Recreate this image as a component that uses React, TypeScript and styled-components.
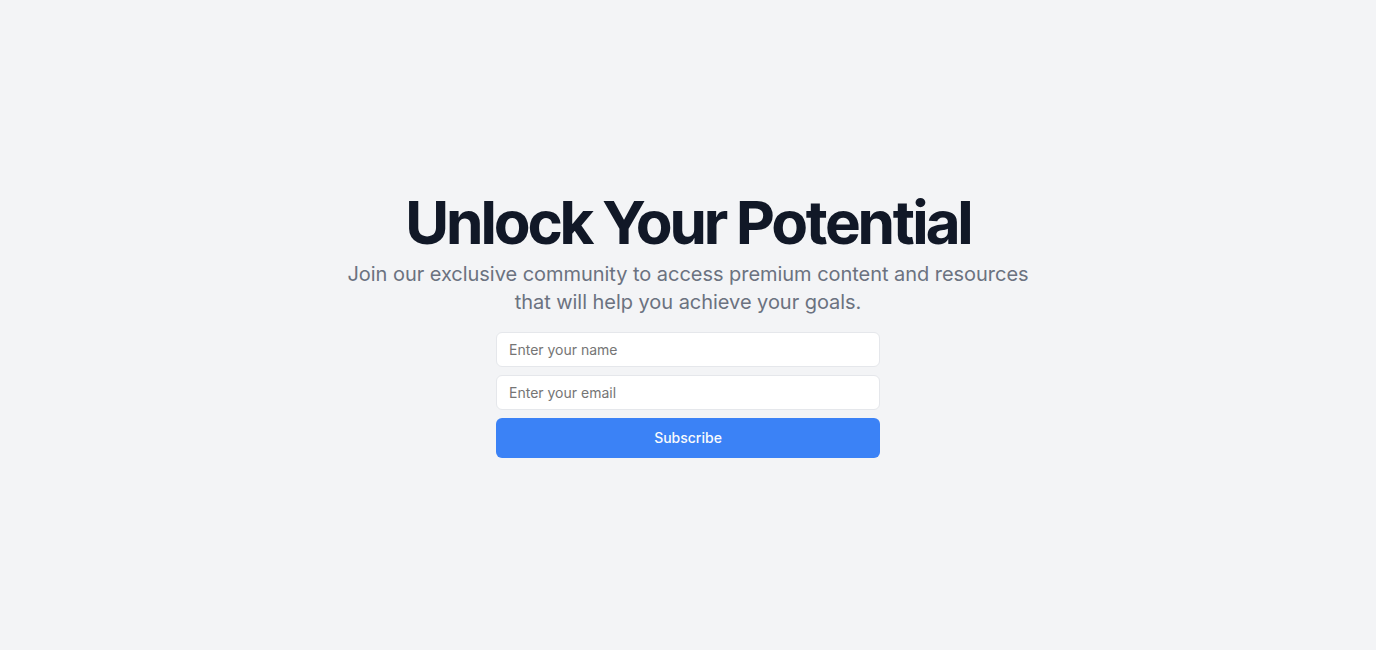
import React from "react";
import styled, { createGlobalStyle } from "styled-components";

const GlobalStyle = createGlobalStyle`
  *, *::before, *::after { box-sizing: border-box; }
  body {
    margin: 0;
    font-family: Inter, sans-serif;
    line-height: 1.5;
    color: #111827;
  }
`;

const Hero = styled.section`
  min-height: 100vh;
  display: flex;
  flex-direction: column;
  align-items: center;
  justify-content: center;
  background: #f3f4f6;
  text-align: center;
`;

const Title = styled.h1`
  margin: 0;
  padding-left: 2px;
  font-family: "Inter Tight", Inter, sans-serif;
  font-size: 60px;
  line-height: 60px;
  font-weight: 700;
  letter-spacing: -1.12px;
  color: #111827;
`;

const Lead = styled.p`
  margin: 8px 0 0;
  max-width: 700px;
  font-size: 20px;
  line-height: 28px;
  letter-spacing: -0.04px;
  color: #6b7280;
`;

const Form = styled.form`
  margin-top: 16px;
  width: 384px;
  display: flex;
  flex-direction: column;
  gap: 8px;
`;

const Field = styled.input`
  height: 35px;
  padding: 8px 12px;
  border: 1px solid #e5e7eb;
  border-radius: 6px;
  background: #fff;
  font: 400 14px/20px Inter, sans-serif;
  color: #111827;
  &::placeholder { color: #757575; }
`;

const SubmitButton = styled.button`
  height: 40px;
  border: 0;
  border-radius: 6px;
  background: #3b82f6;
  color: #f8fafc;
  font: 500 14px/20px Inter, sans-serif;
`;

export default function App() {
  return (
    <>
      <GlobalStyle />
      <Hero>
        <Title>Unlock Your Potential</Title>
        <Lead>
          Join our exclusive community to access premium content and resources that will help you achieve your goals.
        </Lead>
        <Form onSubmit={(e) => e.preventDefault()}>
          <Field type="text" placeholder="Enter your name" />
          <Field type="email" placeholder="Enter your email" />
          <SubmitButton type="submit">Subscribe</SubmitButton>
        </Form>
      </Hero>
    </>
  );
}
